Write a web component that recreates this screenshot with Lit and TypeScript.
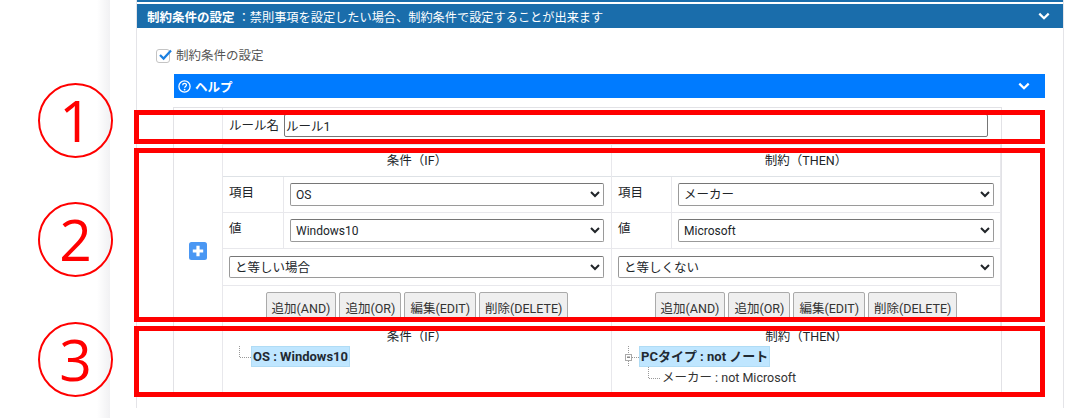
import { LitElement, html, css } from "lit";
import { customElement } from "lit/decorators.js";

const chevron = html`<svg class="chev" viewBox="0 0 12 8"><path d="M1.3 1.6 6 6.2l4.7-4.6" fill="none" stroke="#fff" stroke-width="2.2"/></svg>`;

@customElement("app-root")
export class AppRoot extends LitElement {
  static styles = css`
    :host { display: block; position: relative; width: 1083px; height: 418px; overflow: hidden; background: #fff; color: #212529;
      font-family: Roboto, "Noto Sans CJK JP", sans-serif; font-size: 12.5px; }
    .page { display: flex; height: 408px; }
    .gutter { width: 110px; flex: none; background: linear-gradient(to right, #fff 88%, #f1f1f3 100%); height: 418px; }
    .spacer { width: 26px; flex: none; }
    .panel { width: 928px; flex: none; box-sizing: border-box; border-left: 1px solid #e4e4e8; border-right: 1px solid #e4e4e8; height: 408px; }
    .topline { height: 2px; background: #1a6dab; }
    .head { margin-top: 2px; height: 24px; background: #1a6dab; color: #fff; display: flex; align-items: center; padding: 0 13px 0 10px; justify-content: space-between; }
    .head b { font-weight: 700; }
    .head .desc { font-size: 12.2px; }
    .chev { width: 12px; height: 8px; display: block; }
    .check { display: flex; align-items: center; gap: 6px; margin: 20px 0 0 19px; height: 16px; color: #555; line-height: 14px; }
    .box { width: 14px; height: 14px; box-sizing: border-box; border: 1.5px solid #c4c4c4; border-radius: 3px; position: relative; background: #fff; }
    .box svg { position: absolute; left: 0; top: -3px; width: 16px; height: 15px; }
    .help { margin: 10px 0 0 37px; width: 871px; height: 24px; background: #007bff; color: #fff; display: flex; align-items: center; justify-content: space-between; padding: 0 15px 0 4px; box-sizing: border-box; font-weight: 700; }
    .help span { display: flex; align-items: center; gap: 4px; }
    .help svg.q { width: 13px; height: 13px; }
    .table { margin: 9px 0 0 36px; width: 829px; box-sizing: border-box; border: 1px solid #e2e2e6; border-bottom: 0; height: 285px; display: grid; grid-template-columns: 49px 389px 389px; grid-template-rows: 37px 183px 1fr; }
    .side { border-right: 1px solid #e8e8ec; display: flex; align-items: flex-start; justify-content: center; }
    .plus { width: 18px; height: 18px; margin-top: 97px; display: block; }
    .rule { grid-column: 2 / 4; display: flex; align-items: flex-start; padding: 6px 13px 0 6px; gap: 5px; border-bottom: 1px solid #e8e8ec; }
    .rule label { line-height: 24px; width: 50px; white-space: nowrap; }
    .rule input { flex: 1; height: 23px; box-sizing: border-box; font: inherit; color: inherit; border: 1px solid #767676; border-radius: 2px; padding: 0 1px; margin: 0; background: #fff; outline: none; min-width: 0; }
    .col { border-right: 1px solid #e8e8ec; display: flex; flex-direction: column; min-width: 0; }
    .col:last-child { border-right: 0; }
    .title { text-align: center; height: 32px; line-height: 32px; box-sizing: border-box; border-bottom: 1px solid #dee2e6; flex: none; }
    .row { display: flex; border-bottom: 1px solid #e8e8ec; height: 35px; flex: none; }
    .row.wide { height: 36px; }
    .lab { width: 61px; box-sizing: border-box; padding: 6px 0 0 6px; border-right: 1px solid #e8e8ec; flex: none; line-height: 20px; }
    .then .lab { width: 60px; }
    .cell { flex: 1; display: flex; align-items: flex-start; padding: 6px 7px 0 6px; min-width: 0; }
    .then .cell { padding-right: 6px; }
    .wide .cell { padding-top: 7px; }
    .sel { width: 100%; height: 23px; box-sizing: border-box; font: inherit; color: #212529; border: 1px solid #9a9a9a; border-top-color: #767676; border-radius: 2px; background: #fff; margin: 0; padding: 0 0 0 1px; }
    .wide .sel { height: 22px; }
    .sel.latin { font-size: 12px; }
    .btns { display: flex; justify-content: center; gap: 3px; padding-top: 6px; height: 29px; overflow: hidden; flex: none; }
    .btns button { height: 30px; font: inherit; color: #333; padding: 0 5px; margin: 0; background: #efefef; border: 1px solid #aaa; border-radius: 2px; white-space: nowrap; }
    .tree { display: flex; flex-direction: column; }
    .tree .t { text-align: center; height: 18px; line-height: 18px; }
    .node { display: flex; align-items: center; }
    .hl { background: #bfe6ff; border: 1px solid #b0dcf5; box-sizing: border-box; height: 21px; line-height: 19px; font-weight: 700; font-size: 13px; padding: 0 1px; white-space: nowrap; color: #1f2a33; }
    .conn { flex: none; display: block; }
    .plain { white-space: nowrap; line-height: 20px; color: #333; margin-left: 1px; }
    .sub { display: flex; align-items: center; }
    .ann { position: absolute; box-sizing: border-box; border: 5px solid #f00; left: 134px; width: 911px; }
    .a1 { top: 110px; height: 34px; }
    .a2 { top: 148px; height: 174px; }
    .a3 { top: 326px; height: 71px; }
    .num { position: absolute; left: 38px; width: 75px; height: 75px; box-sizing: border-box; border: 2px solid #f00; border-radius: 50%; color: #f00; display: flex; align-items: center; justify-content: center; font-family: "Open Sans", sans-serif; font-size: 57px; line-height: 1; }
    .n1 { top: 83px; } .n2 { top: 202px; } .n3 { top: 322px; }
  `;

  private col(ifc: boolean) {
    const [a, b, c] = ifc ? ["OS", "Windows10", "と等しい場合"] : ["メーカー", "Microsoft", "と等しくない"];
    return html`<div class="col ${ifc ? "" : "then"}">
      <div class="title">${ifc ? "条件（IF）" : "制約（THEN）"}</div>
      <div class="row"><div class="lab">項目</div><div class="cell"><select class="sel ${ifc ? "latin" : ""}"><option>${a}</option></select></div></div>
      <div class="row"><div class="lab">値</div><div class="cell"><select class="sel latin"><option>${b}</option></select></div></div>
      <div class="row wide"><div class="cell"><select class="sel"><option>${c}</option></select></div></div>
      <div class="btns"><button>追加(AND)</button><button>追加(OR)</button><button>編集(EDIT)</button><button>削除(DELETE)</button></div>
    </div>`;
  }

  render() {
    return html`
      <div class="page">
        <div class="gutter"></div><div class="spacer"></div>
        <div class="panel">
          <div class="topline"></div>
          <div class="head"><span><b>制約条件の設定</b> <span class="desc">：禁則事項を設定したい場合、制約条件で設定することが出来ます</span></span>${chevron}</div>
          <div class="check"><div class="box"><svg viewBox="0 0 16 15"><path d="M3 8l3.6 3.6L14 3.5" fill="none" stroke="#1a7fe0" stroke-width="2.2"/></svg></div>制約条件の設定</div>
          <div class="help"><span><svg class="q" viewBox="0 0 13 13"><circle cx="6.5" cy="6.5" r="5.6" fill="none" stroke="#fff" stroke-width="1.3"/><path d="M4.7 5.2c0-2.3 3.7-2.3 3.7-.1 0 1.3-1.8 1.4-1.8 2.7" fill="none" stroke="#fff" stroke-width="1.3"/><circle cx="6.6" cy="9.6" r=".9" fill="#fff"/></svg>ヘルプ</span>${chevron}</div>
          <div class="table">
            <div class="side"></div>
            <div class="rule"><label>ルール名</label><input .value=${"ルール1"} /></div>
            <div class="side"><svg class="plus" viewBox="0 0 18 18"><rect width="18" height="18" rx="2.5" fill="#4a97f3"/><path d="M9 3.8v10.4M3.8 9h10.4" stroke="#fff" stroke-width="3.2"/></svg></div>
            ${this.col(true)}${this.col(false)}
            <div class="side"></div>
            <div class="col tree">
              <div class="t">条件（IF）</div>
              <div class="node">
                <svg class="conn" style="margin-left:16px" width="12" height="21" viewBox="0 0 12 21"><path d="M.5 0v11.5H12" fill="none" stroke="#999" stroke-dasharray="1 1"/></svg>
                <div class="hl">OS : Windows10</div>
              </div>
            </div>
            <div class="col tree">
              <div class="t">制約（THEN）</div>
              <div class="node">
                <svg class="conn" style="margin-left:12px" width="15" height="21" viewBox="0 0 15 21"><path d="M4.5 0v8M4.5 15v6M8 11.5h7" fill="none" stroke="#999" stroke-dasharray="1 1"/><rect x="1.5" y="8.5" width="6" height="6" fill="#fff" stroke="#aaa"/><rect x="3" y="10.5" width="3" height="1.5" fill="#888"/></svg>
                <div class="hl">PCタイプ : not ノート</div>
              </div>
              <div class="sub">
                <svg class="conn" style="margin-left:36px" width="13" height="21" viewBox="0 0 13 21"><path d="M.5 0v11.5H13" fill="none" stroke="#999" stroke-dasharray="1 1"/></svg>
                <div class="plain">メーカー : not Microsoft</div>
              </div>
            </div>
          </div>
        </div>
      </div>
      <div class="ann a1"></div><div class="ann a2"></div><div class="ann a3"></div>
      <div class="num n1">1</div><div class="num n2">2</div><div class="num n3">3</div>
    `;
  }
}
